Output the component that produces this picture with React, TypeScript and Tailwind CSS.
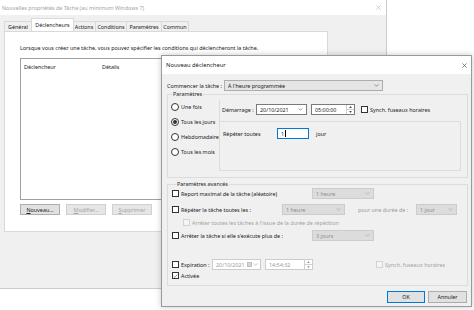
import React from 'react'

const Chevron = ({ color = '#555' }: { color?: string }) => (
  <svg viewBox="0 0 6 4" className="w-[5px] h-[3px] shrink-0">
    <path d="M0.5 0.5 L3 3 L5.5 0.5" fill="none" stroke={color} strokeWidth="0.8" />
  </svg>
)

const Spin = ({ disabled }: { disabled?: boolean }) => (
  <div className="w-[8px] h-full flex flex-col border-l border-[#d0d0d0]">
    <div className="flex-1 flex items-center justify-center border-b border-[#d0d0d0]">
      <svg viewBox="0 0 4 3" className="w-[3px] h-[2px]">
        <path d="M0 3 L2 0 L4 3 Z" fill={disabled ? '#9a9a9a' : '#444'} />
      </svg>
    </div>
    <div className="flex-1 flex items-center justify-center">
      <svg viewBox="0 0 4 3" className="w-[3px] h-[2px]">
        <path d="M0 0 L2 3 L4 0 Z" fill={disabled ? '#9a9a9a' : '#444'} />
      </svg>
    </div>
  </div>
)

const Check = ({ checked, disabled }: { checked?: boolean; disabled?: boolean }) => (
  <span
    className={`w-[7px] h-[7px] border flex items-center justify-center shrink-0 ${
      disabled ? 'border-[#d2d2d2] bg-[#f5f5f5]' : 'border-[#333333] bg-white'
    }`}
  >
    {checked && (
      <svg viewBox="0 0 8 8" className="w-[6px] h-[6px]">
        <path d="M1 4.3 L3.1 6.3 L7 1.6" fill="none" stroke="#333" strokeWidth="0.9" />
      </svg>
    )}
  </span>
)

const Radio = ({ checked, label }: { checked?: boolean; label: string }) => (
  <div className="h-[15px] pt-[2px] flex items-center gap-[2px]">
    <span className="w-[8px] h-[8px] rounded-full border border-[#333333] bg-white flex items-center justify-center shrink-0">
      {checked && <span className="w-[4px] h-[4px] rounded-full bg-[#333333]" />}
    </span>
    <span>{label}</span>
  </div>
)

const Combo = ({ w, text, disabled }: { w: string; text: string; disabled?: boolean }) => (
  <div
    className={`h-[11px] ${w} border flex items-center justify-between pl-[3px] pr-[3px] shrink-0 ${
      disabled ? 'bg-[#dcdcdc] border-[#cccccc] text-[#8f8f8f]' : 'bg-[#e5e5e5] border-[#adadad]'
    }`}
  >
    <span>{text}</span>
    <Chevron color={disabled ? '#a0a0a0' : '#555'} />
  </div>
)

const Tab = ({ w, label, active }: { w: string; label: string; active?: boolean }) => (
  <div
    className={`${w} flex items-center justify-center border border-b-0 ${
      active ? 'h-[13px] bg-white border-[#d9d9d9] -mx-[1px] relative z-10' : 'h-[10px] bg-[#f0f0f0] border-[#d9d9d9] -ml-[1px] first:ml-0'
    }`}
  >
    {label}
  </div>
)

const Legend = ({ children }: { children: React.ReactNode }) => (
  <legend className="ml-[4px] px-[1px] leading-[8px] h-[8px]">{children}</legend>
)

export default function App() {
  return (
    <div className="relative w-[474px] h-[310px] bg-white overflow-hidden whitespace-nowrap text-[5.4px] leading-[8px] text-[#222222] font-['Noto_Sans',sans-serif]">
      {/* Fenêtre des propriétés */}
      <div className="absolute left-0 top-0 w-[387px] h-[289px] bg-[#f0f0f0] border-r border-b border-[#cccccc] flex flex-col">
        <div className="h-[15px] bg-white flex items-center justify-between pl-[2px] pr-[5px] text-[#a3a3a3]">
          <span>Nouvelles propriétés de Tâche (au minimum Windows 7)</span>
          <svg viewBox="0 0 6 6" className="w-[5px] h-[5px]">
            <path d="M0.5 0.5 L5.5 5.5 M5.5 0.5 L0.5 5.5" stroke="#b0b0b0" strokeWidth="0.7" />
          </svg>
        </div>
        <div className="h-[16px] pl-[4px] flex items-end">
          <Tab w="w-[28px]" label="Général" />
          <Tab w="w-[43px]" label="Déclencheurs" active />
          <Tab w="w-[24px]" label="Actions" />
          <Tab w="w-[32px]" label="Conditions" />
          <Tab w="w-[36px]" label="Paramètres" />
          <Tab w="w-[28px]" label="Commun" />
        </div>
        <div className="ml-[4px] w-[324px] h-[201px] bg-white border border-[#d9d9d9] flex flex-col pl-[15px]">
          <p className="mt-[12px]">
            Lorsque vous créez une tâche, vous pouvez spécifier les conditions qui déclencheront la tâche.
          </p>
          <div className="mt-[6px] w-[300px] h-[142px] border border-[#a0a0a0] bg-white">
            <div className="flex pl-[3px] mt-[4px]">
              <span className="w-[78px]">Déclencheur</span>
              <span>Détails</span>
            </div>
          </div>
          <div className="mt-[4px] flex gap-[6px]">
            <div className="w-[40px] h-[11px] border border-[#adadad] bg-[#e1e1e1] flex items-center justify-center">
              <span><span className="underline">N</span>ouveau...</span>
            </div>
            <div className="w-[40px] h-[11px] border border-[#d0d0d0] bg-[#e6e6e6] text-[#a5a5a5] flex items-center justify-center">
              <span><span className="underline">M</span>odifier...</span>
            </div>
            <div className="w-[40px] h-[11px] border border-[#d0d0d0] bg-[#e6e6e6] text-[#a5a5a5] flex items-center justify-center">
              <span><span className="underline">S</span>upprimer</span>
            </div>
          </div>
        </div>
      </div>

      {/* Dialogue Nouveau déclencheur */}
      <div className="absolute left-[161px] top-[55px] w-[311px] h-[252px] bg-[#f0f0f0] border border-[#9a9a9a] shadow-[0_0_6px_rgba(0,0,0,0.22)] flex flex-col">
        <div className="h-[18px] bg-white flex items-center justify-between pl-[4px] pr-[4px] shrink-0">
          <span className="text-[5.8px]">Nouveau déclencheur</span>
          <svg viewBox="0 0 6 6" className="w-[5px] h-[5px]">
            <path d="M0.5 0.5 L5.5 5.5 M5.5 0.5 L0.5 5.5" stroke="#333" strokeWidth="0.7" />
          </svg>
        </div>

        <div className="flex flex-col pl-[5px]">
          <div className="mt-[6px] h-[11px] flex items-center">
            <span className="w-[57px]">Commencer la tâche :</span>
            <Combo w="w-[159px]" text="À l'heure programmée" />
          </div>

          {/* Paramètres */}
          <fieldset className="-mt-[1px] w-[301px] h-[88px] border border-[#dcdcdc] flex">
            <Legend>Paramètres</Legend>
            <div className="flex h-full">
              <div className="w-[51px] pl-[3px] flex flex-col">
                <Radio label="Une fois" />
                <Radio label="Tous les jours" checked />
                <Radio label="Hebdomadaire" />
                <Radio label="Tous les mois" />
              </div>
              <div className="mt-[2px] mb-[6px] border-l border-[#dcdcdc] flex flex-col">
                <div className="mt-[4px] h-[11px] flex items-center pl-[2px]">
                  <span className="w-[34px]">Démarrage :</span>
                  <div className="w-[51px] h-[11px] border border-[#7a7a7a] bg-white flex items-center justify-between pl-[3px] pr-[3px]">
                    <span>20/10/2021</span>
                    <Chevron />
                  </div>
                  <div className="ml-[4px] w-[44px] h-[11px] border border-[#7a7a7a] bg-white flex items-center justify-between pl-[3px]">
                    <span>05:00:00</span>
                    <Spin />
                  </div>
                  <div className="ml-[6px] flex items-center gap-[2px]">
                    <Check />
                    <span>Synch. fuseaux horaires</span>
                  </div>
                </div>
                <div className="mt-[6px] w-[241px] h-[50px] border border-l-0 border-[#dcdcdc] pl-[3px]">
                  <div className="mt-[6px] h-[11px] flex items-center">
                    <span className="w-[54px]">Répéter toutes</span>
                    <div className="w-[32px] h-[11px] border border-[#0078d7] bg-white flex items-center pl-[3px]">
                      <span>1</span>
                      <span className="w-[1px] h-[7px] bg-[#000] ml-[0.5px]" />
                    </div>
                    <span className="ml-[7px]">jour</span>
                  </div>
                </div>
              </div>
            </div>
          </fieldset>

          {/* Paramètres avancés */}
          <fieldset className="mt-[2px] w-[301px] h-[106px] border border-[#dcdcdc] pl-[4px]">
            <Legend>Paramètres avancés</Legend>
            <div className="h-[11px] flex items-center gap-[2px]">
              <Check />
              <span className="w-[129px]">Report maximal de la tâche (aléatoire)</span>
              <Combo w="w-[62px]" text="1 heure" disabled />
            </div>
            <div className="mt-[5px] h-[11px] flex items-center gap-[2px]">
              <Check />
              <span className="w-[99px]">Répéter la tâche toutes les :</span>
              <Combo w="w-[63px]" text="1 heure" disabled />
              <span className="ml-[11px] w-[56px] text-[#9a9a9a]">pour une durée de :</span>
              <Combo w="w-[41px]" text="1 jour" disabled />
            </div>
            <div className="mt-[3px] h-[9px] flex items-center gap-[2px] pl-[11px] text-[#a3a3a3]">
              <Check disabled />
              <span>Arrêter toutes les tâches à l'issue de la durée de répétition</span>
            </div>
            <div className="mt-[3px] h-[11px] flex items-center gap-[2px]">
              <Check />
              <span className="w-[129px]">Arrêter la tâche si elle s'exécute plus de :</span>
              <Combo w="w-[62px]" text="3 jours" disabled />
            </div>
            <div className="mt-[18px] h-[11px] flex items-center gap-[2px]">
              <Check />
              <span className="w-[29px]">Expiration :</span>
              <div className="w-[49px] h-[11px] border border-[#cccccc] bg-white text-[#9a9a9a] flex items-center justify-between pl-[3px] pr-[2px]">
                <span>20/10/2021</span>
                <span className="flex items-center gap-[1px]">
                  <span className="w-[5px] h-[5px] bg-[#d6d6d6] border border-[#c0c0c0]" />
                  <Chevron color="#a0a0a0" />
                </span>
              </div>
              <div className="ml-[2px] w-[48px] h-[11px] border border-[#cccccc] bg-white text-[#9a9a9a] flex items-center justify-between pl-[3px]">
                <span>14:54:32</span>
                <Spin disabled />
              </div>
              <div className="ml-[61px] flex items-center gap-[2px] text-[#a3a3a3]">
                <Check disabled />
                <span>Synch. fuseaux horaires</span>
              </div>
            </div>
            <div className="mt-[1px] h-[9px] flex items-center gap-[2px]">
              <Check checked />
              <span>Activée</span>
            </div>
          </fieldset>

          <div className="mt-[5px] flex justify-end gap-[3px] pr-[4px]">
            <div className="w-[38px] h-[12px] border border-[#0078d7] bg-[#e1e1e1] flex items-center justify-center">
              OK
            </div>
            <div className="w-[39px] h-[12px] border border-[#adadad] bg-[#e1e1e1] flex items-center justify-center">
              Annuler
            </div>
          </div>
        </div>
      </div>
    </div>
  )
}
